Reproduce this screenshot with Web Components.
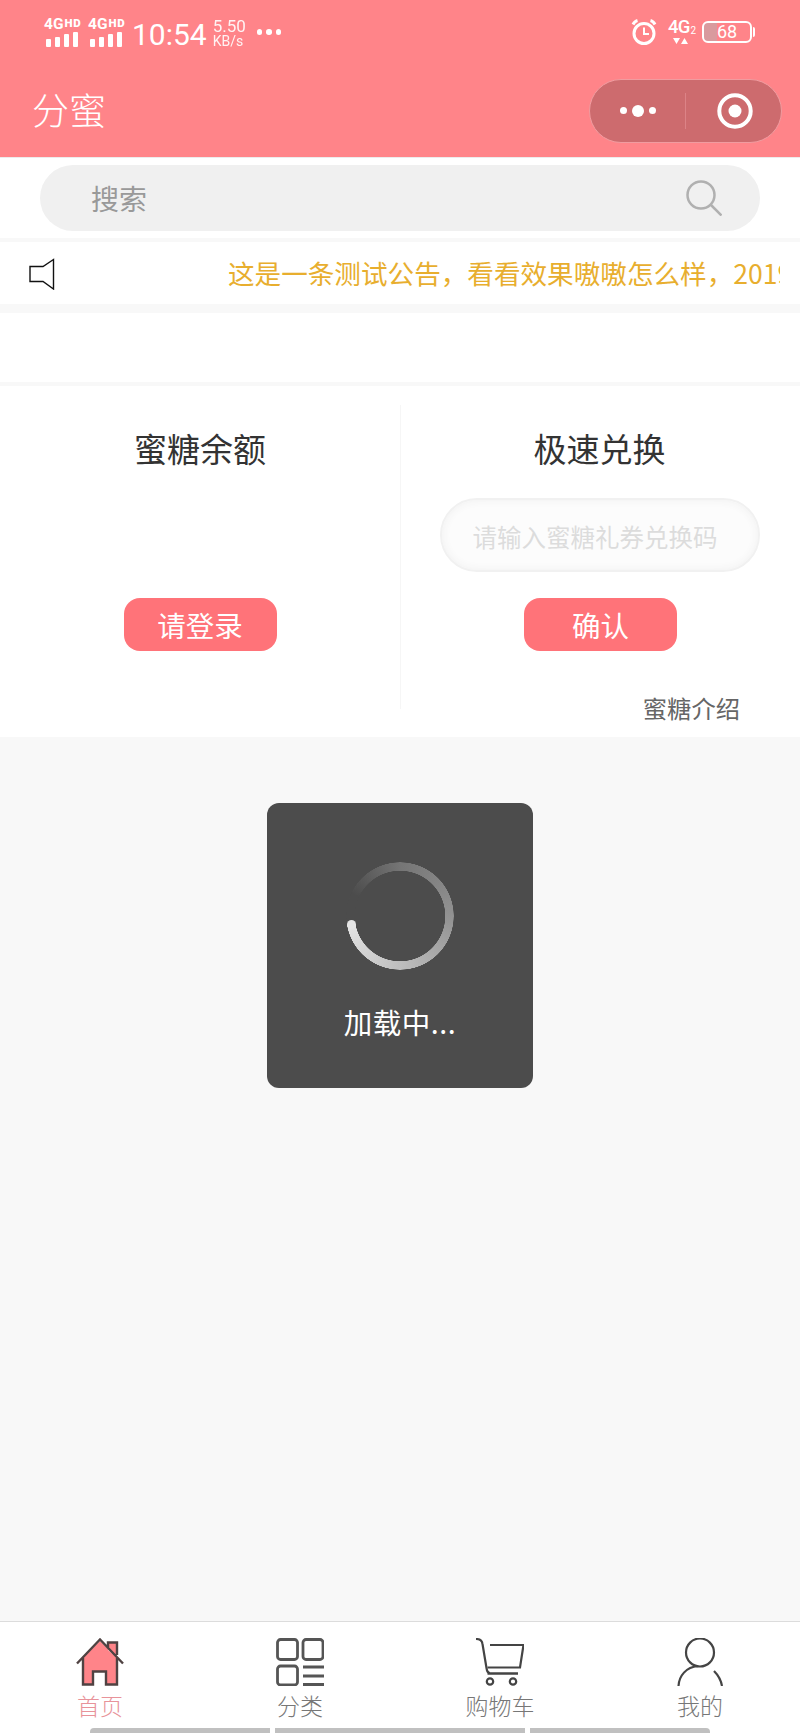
<!DOCTYPE html>
<html lang="zh">
<head>
<meta charset="utf-8">
<title>分蜜</title>
<style>
  html, body { margin: 0; padding: 0; }
  body { font-family: "Noto Sans CJK SC", Roboto, sans-serif; width: 800px; height: 1733px; overflow: hidden; }
</style>
</head>
<body>
<fenmi-app>
  <status-bar></status-bar>
  <nav-bar title="分蜜"></nav-bar>
  <search-box placeholder="搜索"></search-box>
  <notice-bar>这是一条测试公告，看看效果嗷嗷怎么样，2019</notice-bar>
  <blank-strip></blank-strip>
  <wallet-panel></wallet-panel>
  <loading-toast slot="overlay">加载中...</loading-toast>
  <tab-bar slot="footer">
    <tab-item label="首页" active>
      <svg width="48" height="48" viewBox="0 0 48 48">
        <path d="M32 12V4.500H41V20L24 3 7 20V46.500H17V33.500H30V46.500H41V20Z" fill="#ff8489"/>
        <path d="M32 9V4.500H41V17M7 20V46.500H17V33.500H30V46.500H41V20M1 25.500 24 1.500 47 25.500" fill="none" stroke="#4f4242" stroke-width="2.400"/>
      </svg>
    </tab-item>
    <tab-item label="分类">
      <svg width="48" height="48" viewBox="0 0 48 48" fill="none" stroke="#555" stroke-width="2.800">
        <rect x="1.500" y="1.500" width="20" height="20" rx="3"/>
        <rect x="27" y="1.500" width="20" height="20" rx="3"/>
        <rect x="1.500" y="28" width="20" height="19" rx="3"/>
        <path d="M27 29H48M27 38H48M27 46.500H48"/>
      </svg>
    </tab-item>
    <tab-item label="购物车">
      <svg width="48" height="48" viewBox="0 0 48 48" fill="none" stroke="#444" stroke-width="2.200">
        <path d="M0 1C4 1 6 2 6.500 6L10.500 30C11 34 12 35 14 35"/>
        <path d="M14 7H47.500L44 29.500H11.500"/>
        <path d="M11.500 35.500H42" stroke-width="2.500"/>
        <circle cx="14" cy="43.500" r="3.200"/>
        <circle cx="37" cy="43.500" r="3.200"/>
      </svg>
    </tab-item>
    <tab-item label="我的">
      <svg width="48" height="48" viewBox="0 0 48 48" fill="none" stroke="#444" stroke-width="2.200">
        <circle cx="24" cy="14.500" r="14"/>
        <path d="M2.500 48C3 38 10 29 22 28M38 33C42 37 45 42 46 48"/>
      </svg>
    </tab-item>
  </tab-bar>
</fenmi-app>

<script>
// page shell: sections stack, the tab bar stays at the bottom
class FenmiApp extends HTMLElement {
  constructor() {
    super();
    this.attachShadow({ mode: "open" });
    this.shadowRoot.innerHTML = `
      <style>
      :host {
        display: flex;
        flex-direction: column;
        position: relative;
        width: 800px;
        height: 1733px;
        background: #f8f8f8;
      }
      .main { flex: 1; display: flex; flex-direction: column; }
      </style>
      <div class="main"><slot></slot></div>
      <slot name="overlay"></slot>
      <slot name="footer"></slot>
    `;
  }
}

class StatusBar extends HTMLElement {
  constructor() {
    super();
    this.attachShadow({ mode: "open" });
    const signal = `
      <div class="signal">
        <div class="net">4G<small>HD</small></div>
        <div class="bars"><i style="height:8px"></i><i style="height:10px"></i><i style="height:13px"></i><i style="height:15px"></i></div>
      </div>`;
    this.shadowRoot.innerHTML = `
      <style>
      :host {
        display: flex;
        justify-content: space-between;
        align-items: center;
        height: 64px;
        padding: 0 45px 0 44px;
        background: #ff8489;
        color: #fff;
        font-family: Roboto, sans-serif;
      }
      .group { display: flex; align-items: center; }
      .signal { width: 44px; display: flex; flex-direction: column; margin-top: -1px; }
      .net { font-size: 15.500px; font-weight: 700; line-height: 12px; white-space: nowrap; }
      .net small { font-size: 11.500px; font-weight: 900; letter-spacing: .6px; margin-left: 1px; vertical-align: 2px; }
      .bars { display: flex; align-items: flex-end; gap: 4px; height: 15px; margin: 2px 0 0 2px; }
      .bars i { display: block; width: 5px; background: #fff; border-radius: 1px; }
      .time { font-size: 30px; line-height: 34px; margin: 5px 0 0 0; }
      .speed { display: flex; flex-direction: column; align-items: flex-start; width: 34px; margin: 3px 0 0 6px; font-size: 17px; line-height: 15px; opacity: .9; }
      .speed span + span { font-size: 14px; line-height: 15px; }
      .more { display: flex; gap: 4px; margin: 0 0 0 10px; }
      .more i { width: 5.500px; height: 5.500px; border-radius: 50%; background: #fff; }
      .g42 { display: flex; flex-direction: column; align-items: flex-start; width: 24px; margin: 0 10px 0 11px; }
      .g42 b { font-weight: 500; font-size: 18.500px; line-height: 15px; letter-spacing: -.8px; white-space: nowrap; }
      .g42 b sub { font-size: 10px; font-weight: 400; letter-spacing: 0; margin-left: 1px; vertical-align: -1px; line-height: 0; }
      .g42 svg { display: block; margin: 3px 0 0 5px; }
      .battery {
        position: relative;
        box-sizing: border-box;
        width: 50px;
        height: 22px;
        border: 2px solid #fff;
        border-radius: 6px;
        text-align: center;
        font-size: 18px;
        line-height: 18px;
        background: linear-gradient(90deg, #d99a9e 0, #d99a9e 28%, transparent 28%);
      }
      .nub { width: 2px; height: 10px; background: #fff; border-radius: 0 2px 2px 0; margin-left: 1px; }
      </style>
      <div class="group">
        ${signal}
        ${signal}
        <div class="time">10:54</div>
        <div class="speed"><span>5.50</span><span>KB/s</span></div>
        <div class="more"><i></i><i></i><i></i></div>
      </div>
      <div class="group">
        <svg width="26" height="26" viewBox="0 0 26 26" fill="none" stroke="#fff" stroke-width="3">
          <circle cx="13" cy="14.500" r="10"/>
          <path d="M13 8.500V15H18" stroke-width="2"/>
          <path d="M2 5.500C3 3.500 4.500 2 6.500 1.500M24 5.500C23 3.500 21.500 2 19.500 1.500"/>
        </svg>
        <div class="g42">
          <b>4G<sub>2</sub></b>
          <svg width="15" height="6" viewBox="0 0 15 6" fill="#fff"><path d="M0 0H7L3.500 6ZM8 6H15L11.500 0Z"/></svg>
        </div>
        <div class="battery">68</div>
        <div class="nub"></div>
      </div>
    `;
  }
}

class NavBar extends HTMLElement {
  constructor() {
    super();
    this.attachShadow({ mode: "open" });
    this.shadowRoot.innerHTML = `
      <style>
      :host {
        display: flex;
        justify-content: space-between;
        align-items: center;
        height: 93px;
        padding: 0 18px 0 32px;
        background: #ff8489;
        color: #fff;
      }
      .title { font-size: 37px; line-height: 48px; font-weight: 300; margin-top: -4px; }
      .capsule {
        box-sizing: border-box;
        display: flex;
        align-items: center;
        width: 193px;
        height: 64px;
        border: 1px solid #f09ca0;
        border-radius: 32px;
        background: #cd6b6e;
      }
      .dots { flex: 0 0 95px; display: flex; justify-content: center; align-items: center; gap: 5px; box-sizing: border-box; }
      .dots i { display: block; width: 7px; height: 7px; border-radius: 50%; background: #fff; }
      .dots i.big { width: 12px; height: 12px; }
      .sep { width: 1px; height: 36px; background: #dc8387; }
      .target { flex: 1; display: flex; justify-content: center; padding-left: 2px; }
      </style>
      <div class="title">${this.getAttribute("title")}</div>
      <div class="capsule">
        <div class="dots"><i></i><i class="big"></i><i></i></div>
        <div class="sep"></div>
        <div class="target">
          <svg width="36" height="36" viewBox="0 0 36 36"><circle cx="18" cy="18" r="15.700" fill="none" stroke="#fff" stroke-width="4"/><circle cx="18" cy="18" r="6.500" fill="#fff"/></svg>
        </div>
      </div>
    `;
  }
}

class SearchBox extends HTMLElement {
  constructor() {
    super();
    this.attachShadow({ mode: "open" });
    this.shadowRoot.innerHTML = `
      <style>
      :host {
        display: block;
        padding: 8px 40px 7px;
        margin-bottom: 4px;
        background: #fff;
        box-shadow: inset 0 1px 0 #ececec;
      }
      .field {
        display: flex;
        justify-content: space-between;
        align-items: center;
        height: 66px;
        padding: 0 38px 0 51px;
        border-radius: 33px;
        background: #f0f0f0;
        color: #999;
        font-size: 28px;
      }
      svg { display: block; }
      </style>
      <div class="field">
        <span>${this.getAttribute("placeholder")}</span>
        <svg width="36" height="36" viewBox="0 0 36 36" fill="none" stroke="#b0b0b0" stroke-width="2.500">
          <circle cx="15" cy="15" r="13.500"/>
          <path d="M25 25 35.500 35.500"/>
        </svg>
      </div>
    `;
  }
}

class NoticeBar extends HTMLElement {
  constructor() {
    super();
    this.attachShadow({ mode: "open" });
    this.shadowRoot.innerHTML = `
      <style>
      :host {
        display: flex;
        align-items: center;
        height: 62px;
        margin-bottom: 9px;
        padding: 0 20px 0 29px;
        background: #fff;
      }
      svg { flex: none; display: block; margin-top: 2px; }
      .track {
        flex: 1;
        overflow: hidden;
        margin-left: 173px;
        white-space: nowrap;
        color: #e8ae2e;
        font-size: 26.600px;
        line-height: 40px;
      }
      </style>
      <svg width="26" height="32" viewBox="0 0 26 32" fill="none" stroke="#111" stroke-width="1.400">
        <path d="M1 8.500H14L24.500 1.500V31L14 23.500H1Z"/>
      </svg>
      <div class="track"><slot></slot></div>
    `;
  }
}

class BlankStrip extends HTMLElement {
  constructor() {
    super();
    this.attachShadow({ mode: "open" });
    this.shadowRoot.innerHTML = `
      <style>
      :host { display: block; height: 69px; margin-bottom: 4px; background: #fff; }
      </style>
    `;
  }
}

class PillButton extends HTMLElement {
  constructor() {
    super();
    this.attachShadow({ mode: "open" });
    this.shadowRoot.innerHTML = `
      <style>
      :host {
        display: flex;
        justify-content: center;
        align-items: center;
        width: 153px;
        height: 53px;
        border-radius: 16px;
        background: #ff7379;
        color: #fff;
        font-size: 28.500px;
      }
      </style>
      <slot></slot>
    `;
  }
}

class WalletPanel extends HTMLElement {
  constructor() {
    super();
    this.attachShadow({ mode: "open" });
    this.shadowRoot.innerHTML = `
      <style>
      :host {
        display: grid;
        grid-template-columns: 401px 399px;
        align-items: start;
        padding: 19px 0 17px;
        background: #fff;
      }
      .col { display: flex; flex-direction: column; align-items: center; box-sizing: border-box; padding-top: 19px; }
      .left { height: 304px; border-right: 1px solid #f6f6f6; }
      h2 { margin: 0; font-size: 33px; line-height: 48px; font-weight: 400; color: #333; }
      .right h2 { margin-right: 2px; }
      .left pill-button { margin-top: 126px; }
      .input {
        box-sizing: border-box;
        display: flex;
        align-items: center;
        justify-content: center;
        width: 320px;
        height: 74px;
        margin: 26px 2px 0 0;
        padding: 2px 9px 0 0;
        border: 2px solid #f1f1f1;
        border-radius: 37px;
        background: #fcfcfc;
        box-shadow: inset 0 0 10px #f0f0f0;
        color: #dcdcdc;
        font-size: 24.500px;
        white-space: nowrap;
      }
      .right pill-button { margin-top: 26px; }
      .intro { align-self: flex-end; margin: 44px 60px 0 0; font-size: 24.300px; line-height: 25px; color: #666; }
      </style>
      <div class="col left">
        <h2>蜜糖余额</h2>
        <pill-button>请登录</pill-button>
      </div>
      <div class="col right">
        <h2>极速兑换</h2>
        <div class="input">请输入蜜糖礼券兑换码</div>
        <pill-button>确认</pill-button>
        <div class="intro">蜜糖介绍</div>
      </div>
    `;
  }
}

// overlay, sits on top of the grey area
class LoadingToast extends HTMLElement {
  constructor() {
    super();
    this.attachShadow({ mode: "open" });
    this.shadowRoot.innerHTML = `
      <style>
      :host {
        position: absolute;
        left: 267px;
        top: 803px;
        box-sizing: border-box;
        display: flex;
        flex-direction: column;
        align-items: center;
        width: 266px;
        height: 285px;
        padding-top: 59px;
        border-radius: 12px;
        background: #4c4c4c;
        color: #fff;
        font-size: 28.500px;
      }
      .ring { position: relative; width: 108px; height: 108px; }
      .arc {
        position: absolute;
        inset: 0;
        border-radius: 50%;
        background: conic-gradient(from 260deg, #4c4c4c 0deg, #4c4c4c 35deg, #757575 100deg, #929292 190deg, #bebebe 280deg, #e4e4e4 360deg);
        -webkit-mask: radial-gradient(circle, transparent 45px, #000 45.500px, #000 53.500px, transparent 54px);
        mask: radial-gradient(circle, transparent 45px, #000 45.500px, #000 53.500px, transparent 54px);
      }
      .cap { position: absolute; left: 0.500px; top: 58px; width: 9px; height: 9px; border-radius: 50%; background: #e4e4e4; }
      .label { margin-top: 32px; line-height: 40px; letter-spacing: .5px; }
      </style>
      <div class="ring"><div class="arc"></div><div class="cap"></div></div>
      <div class="label"><slot></slot></div>
    `;
  }
}

class TabBar extends HTMLElement {
  constructor() {
    super();
    this.attachShadow({ mode: "open" });
    this.shadowRoot.innerHTML = `
      <style>
      :host {
        display: block;
        border-top: 1px solid #dcdcdc;
        background: #fff;
      }
      .tabs { display: grid; grid-template-columns: repeat(4, 1fr); }
      .gesture { display: flex; gap: 5px; height: 5px; margin-top: 8px; padding: 0 90px; }
      .gesture i { display: block; height: 5px; background: #c0c0c0; }
      .gesture i:nth-child(1) { width: 180px; border-radius: 4px 0 0 0; }
      .gesture i:nth-child(2) { width: 250px; }
      .gesture i:nth-child(3) { width: 180px; border-radius: 0 4px 0 0; }
      </style>
      <div class="tabs"><slot></slot></div>
      <div class="gesture"><i></i><i></i><i></i></div>
    `;
  }
}

class TabItem extends HTMLElement {
  constructor() {
    super();
    this.attachShadow({ mode: "open" });
    const active = this.hasAttribute("active");
    this.shadowRoot.innerHTML = `
      <style>
      :host {
        display: flex;
        flex-direction: column;
        align-items: center;
        padding-top: 16px;
      }
      ::slotted(svg) { display: block; }
      .label {
        margin-top: 4px;
        font-size: 23px;
        line-height: 30px;
        font-weight: 300;
        color: ${active ? "#e8939a" : "#777"};
      }
      </style>
      <slot></slot>
      <div class="label">${this.getAttribute("label")}</div>
    `;
  }
}

customElements.define("fenmi-app", FenmiApp);
customElements.define("status-bar", StatusBar);
customElements.define("nav-bar", NavBar);
customElements.define("search-box", SearchBox);
customElements.define("notice-bar", NoticeBar);
customElements.define("blank-strip", BlankStrip);
customElements.define("pill-button", PillButton);
customElements.define("wallet-panel", WalletPanel);
customElements.define("loading-toast", LoadingToast);
customElements.define("tab-bar", TabBar);
customElements.define("tab-item", TabItem);
</script>
</body>
</html>
